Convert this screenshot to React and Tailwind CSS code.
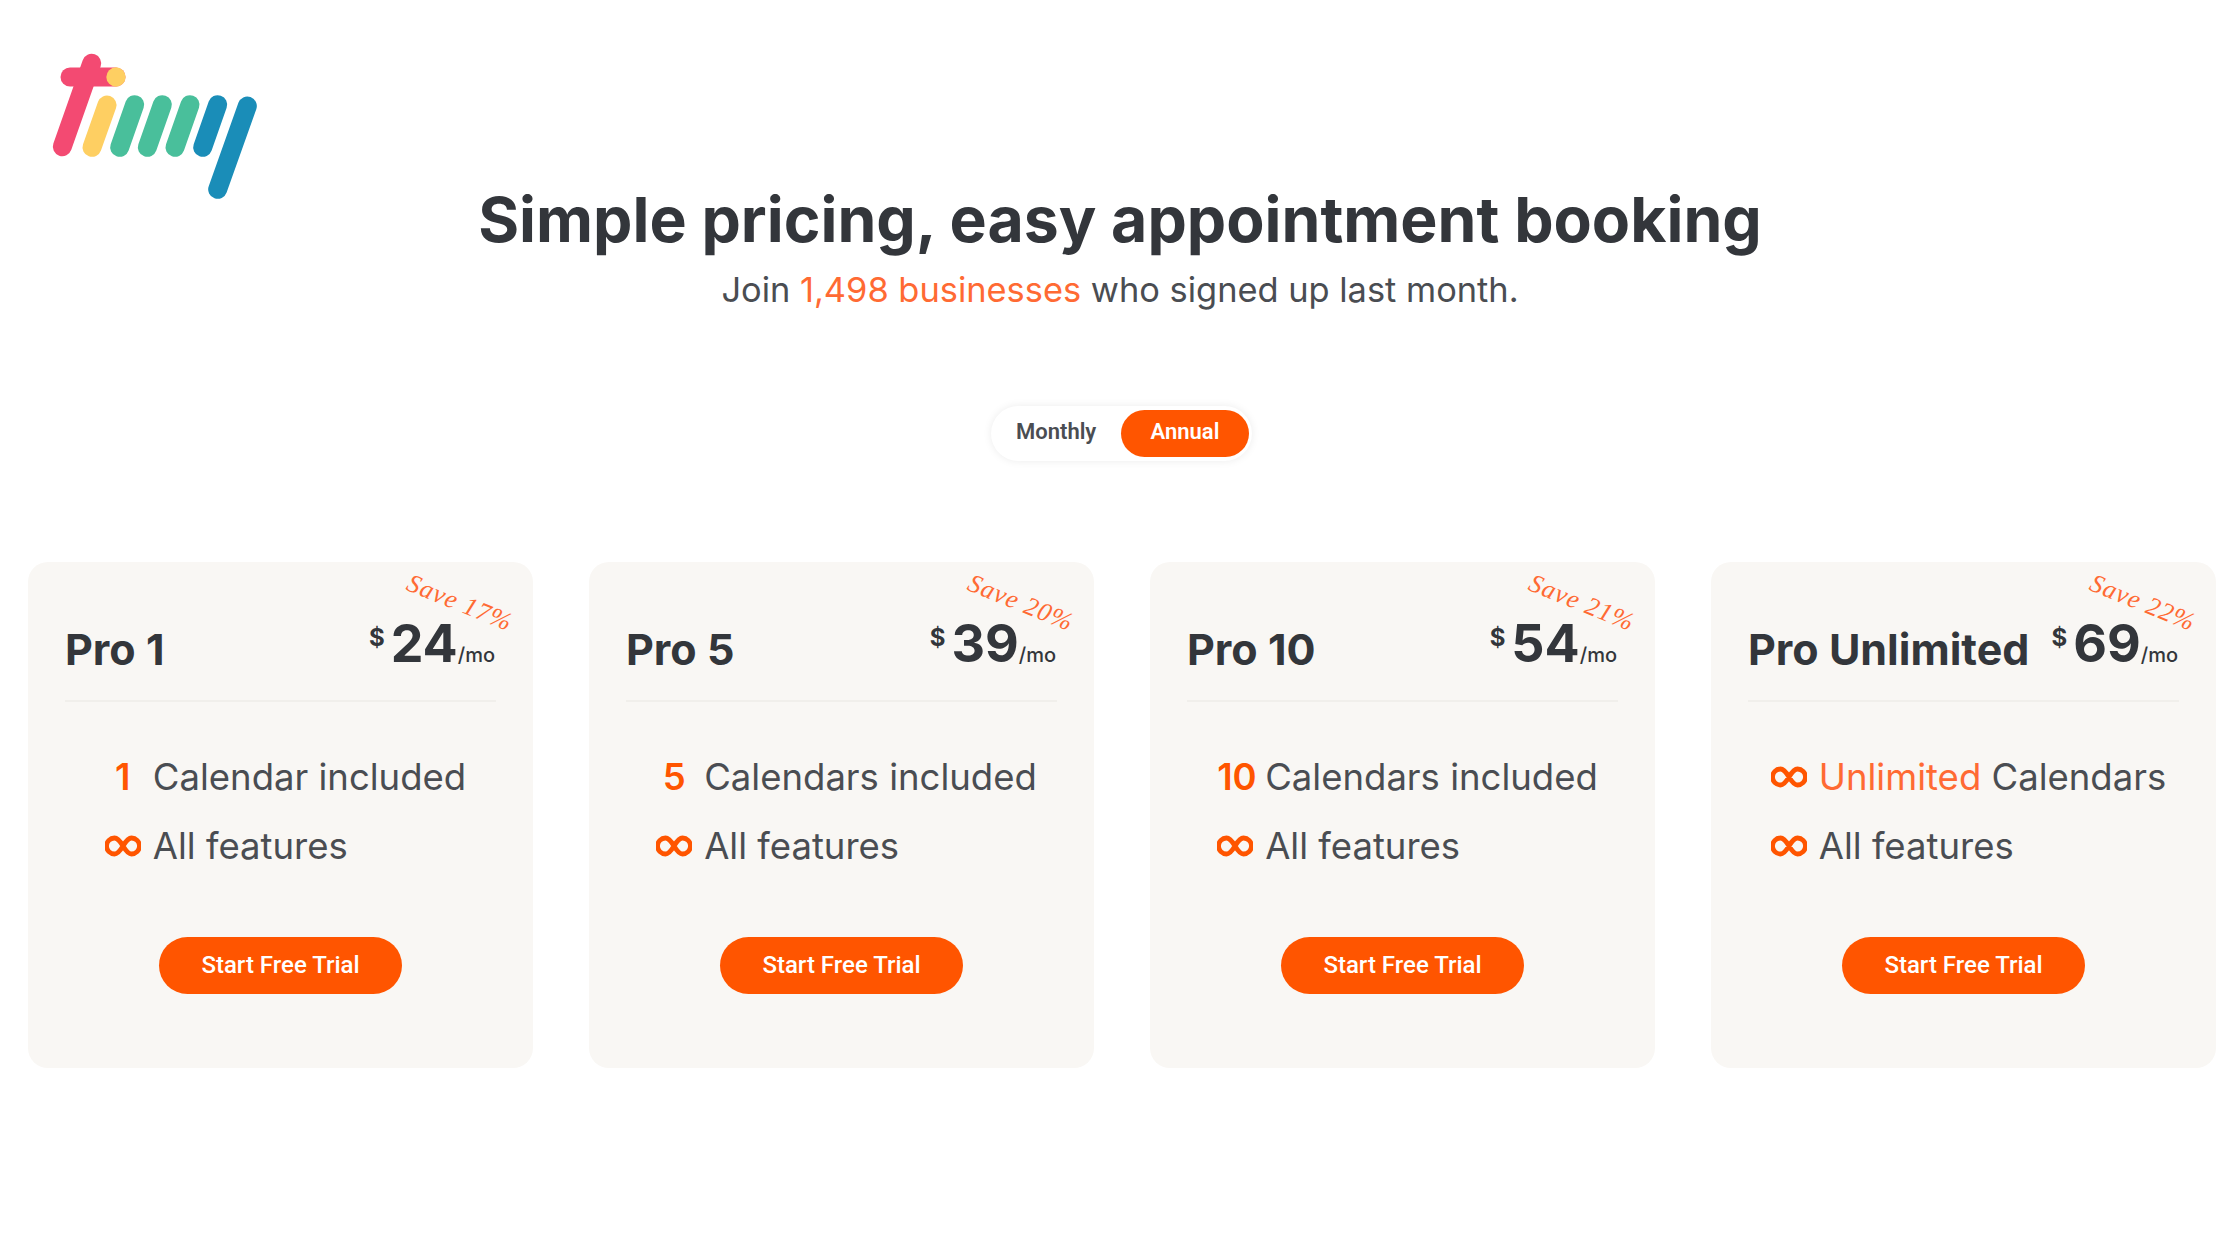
const PLANS = [
  { name: 'Pro 1', price: '24', save: 'Save 17%', count: '1', label: 'Calendar included' },
  { name: 'Pro 5', price: '39', save: 'Save 20%', count: '5', label: 'Calendars included' },
  { name: 'Pro 10', price: '54', save: 'Save 21%', count: '10', label: 'Calendars included' },
  { name: 'Pro Unlimited', price: '69', save: 'Save 22%', unlimited: true, label: 'Calendars' },
];

function InfinityIcon() {
  return (
    <svg width="36" height="22" viewBox="0 0 36 22" fill="none" className="mx-auto">
      <path
        d="M18 11C15 6 12 3 9.5 3A8 8 0 0 0 9.5 19C12 19 15 16 18 11C21 6 24 3 26.5 3A8 8 0 0 1 26.5 19C24 19 21 16 18 11Z"
        stroke="#ff5500"
        strokeWidth="4.8"
      />
    </svg>
  );
}

function Logo() {
  const bars = [
    { d: 'M231 225L186 352', color: '#fecf62' },
    { d: 'M314 224L269 352', color: '#49bf9b' },
    { d: 'M397 224L352 352', color: '#49bf9b' },
    { d: 'M480 224L435 352', color: '#49bf9b' },
    { d: 'M563 224L518 352', color: '#1a8db8' },
    { d: 'M652 228L563 478', color: '#1a8db8' },
  ];
  return (
    <svg width="260" height="190" viewBox="0 0 780 570" fill="none" strokeLinecap="round" strokeWidth="57">
      <path d="M185 100L97 350" stroke="#f34a72" />
      <path d="M120 141H258" stroke="#f34a72" />
      <circle cx="258" cy="141" r="29" fill="#fecf62" />
      {bars.map((b) => (
        <path key={b.d} d={b.d} stroke={b.color} />
      ))}
    </svg>
  );
}

function PlanCard({ plan }) {
  return (
    <div className="relative h-[506px] rounded-[20px] bg-[#f9f7f4] px-[37px]">
      <span className="absolute right-[18px] top-[26px] rotate-[22deg] text-[26px] italic leading-[30px] tracking-[1px] text-[#ff6a33] [font-family:'Liberation_Serif',serif]">
        {plan.save}
      </span>

      {/* header row */}
      <div className="flex h-[140px] items-end justify-between border-b-2 border-[#f1efeb] pb-[25px]">
        <h2 className="text-[43px] font-bold leading-[52px] text-[#33363b]">{plan.name}</h2>
        <div className="flex items-end pr-[1px] text-[#33363b]">
          <span className="mb-[22px] mr-[6px] text-[24px] font-bold leading-[30px]">$</span>
          <span className="mb-[1px] text-[52px] font-bold leading-[60px]">{plan.price}</span>
          <span className="mb-[7px] text-[20px] font-medium leading-[26px]">/mo</span>
        </div>
      </div>

      {/* features */}
      <div className="mt-[51px] flex justify-center pl-[10px]">
        <div className="grid grid-cols-[36px_auto] items-center gap-x-[12px] gap-y-[21px] text-[36.5px] leading-[48px] text-[#4a4d52]">
          {plan.unlimited ? <InfinityIcon /> : <span className="text-center font-semibold text-[#ff5500]">{plan.count}</span>}
          <span>
            {plan.unlimited && <span className="text-[#ff6a33]">Unlimited </span>}
            {plan.label}
          </span>
          <InfinityIcon />
          <span>All features</span>
        </div>
      </div>

      <div className="mt-[67px] flex justify-center">
        <button className="h-[57px] w-[243px] rounded-full bg-[#ff5500] pb-[1px] text-[24px] font-medium text-white [font-family:Roboto,sans-serif]">
          Start Free Trial
        </button>
      </div>
    </div>
  );
}

export default function App() {
  return (
    <div className="h-[1260px] w-[2240px] overflow-hidden bg-white [font-family:Inter,sans-serif]">
      <header className="grid h-[406px] grid-cols-[1fr_auto_1fr] items-start">
        <div className="pl-[30px] pt-[30px]">
          <Logo />
        </div>
        <div className="pt-[177px] text-center">
          <h1 className="text-[62.5px] font-bold leading-[84px] text-[#33363b]">
            Simple pricing, easy appointment booking
          </h1>
          <p className="mt-[7px] text-[34.4px] leading-[44px] text-[#4a4d52]">
            Join <span className="text-[#ff6a33]">1,498 businesses</span> who signed up last month.
          </p>
        </div>
      </header>

      <div className="flex justify-center">
        <div className="ml-[3px] flex h-[55px] w-[261px] items-center justify-between rounded-full bg-white pl-[25px] pr-[3px] shadow-[0_0_8px_rgba(0,0,0,0.08)] [font-family:Roboto,sans-serif]">
          <span className="mb-[4px] text-[22px] font-semibold text-[#4a4d52]">Monthly</span>
          <span className="mb-[1px] flex h-[47px] w-[128px] items-center justify-center rounded-full bg-[#ff5500] pb-[3px] text-[22px] font-semibold text-white">
            Annual
          </span>
        </div>
      </div>

      <div className="mt-[101px] grid grid-cols-[repeat(4,505px)] gap-x-[56px] pl-[28px]">
        {PLANS.map((plan) => (
          <PlanCard key={plan.name} plan={plan} />
        ))}
      </div>
    </div>
  );
}
